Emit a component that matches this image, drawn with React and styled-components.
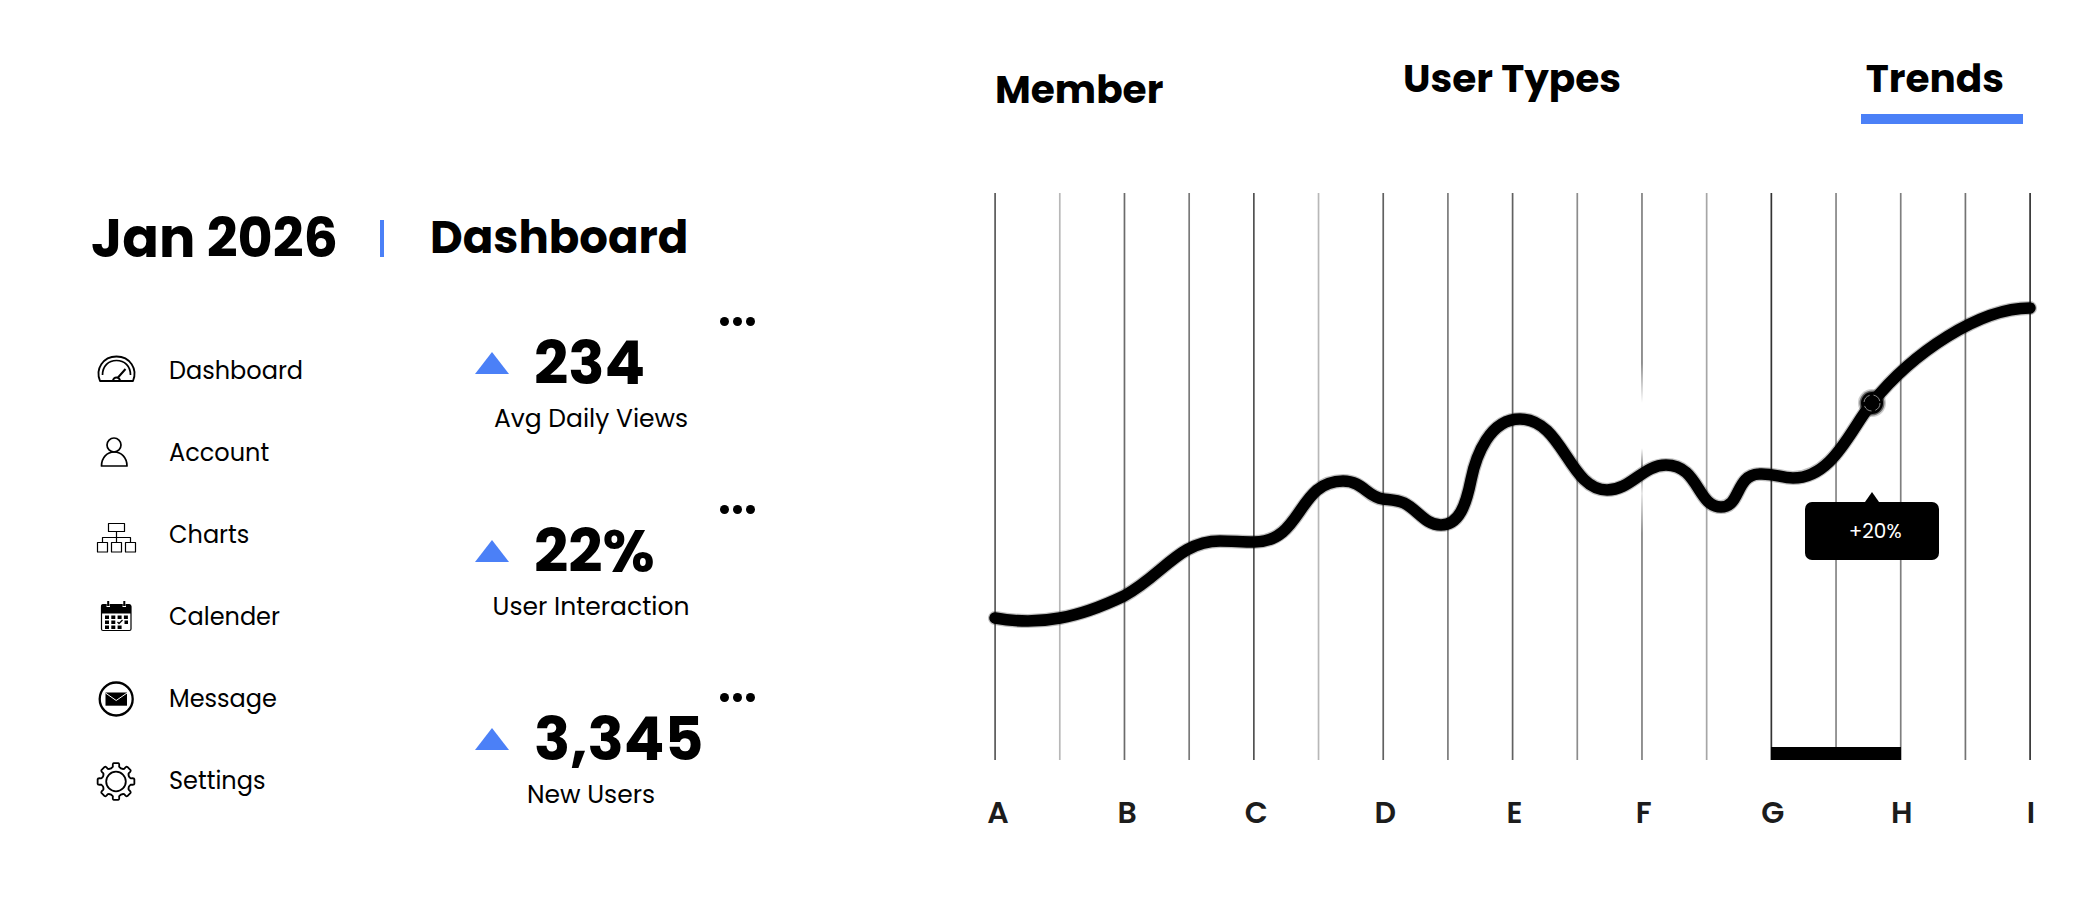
import React from "react"
import styled, { createGlobalStyle } from "styled-components"

const navItems = [
    { name: "Dashboard", icon: <GaugeIcon /> },
    { name: "Account", icon: <AccountIcon /> },
    { name: "Charts", icon: <ChartsIcon /> },
    { name: "Calender", icon: <CalendarIcon /> },
    { name: "Message", icon: <MessageIcon /> },
    { name: "Settings", icon: <GearIcon /> },
]

const stats = [
    { value: "234", label: "Avg Daily Views" },
    { value: "22%", label: "User Interaction" },
    { value: "3,345", label: "New Users" },
]

const months = ["A", "B", "C", "D", "E", "F", "G", "H", "I"]

// darkness of every vertical line, left to right
const lines = [0.65, 0.28, 0.58, 0.52, 0.68, 0.28, 0.62, 0.52, 0.62, 0.45, 0.5, 0.35, 0.8, 0.48, 0.5, 0.55, 0.8]

const trend = [
    "M0 425",
    "C22 429 44 429 65 425",
    "C88 421 108 413 129 403",
    "C168 382 184 348 225 348",
    "C237 348 247 349 259 349",
    "C308 349 302 288 348 288",
    "C368 288 372 304 388 306",
    "C396 307 402 307 409 310",
    "C422 316 430 332 446 332",
    "C464 332 471 312 476 287",
    "C481 262 495 226 525 226",
    "C568 226 574 297 612 297",
    "C636 297 648 272 671 272",
    "C704 272 702 314 726 314",
    "C746 314 740 282 764 281",
    "C777 280 786 285 798 285",
    "C838 285 856 235 877 210",
    "C918 159 985 115 1035 115",
].join(" ")

const gearPath = () => {
    const at = (r, deg) => {
        const t = (deg * Math.PI) / 180
        return `${(20 + r * Math.sin(t)).toFixed(2)} ${(21.5 - r * Math.cos(t)).toFixed(2)}`
    }
    let d = ""
    for (let k = 0; k < 8; k++) {
        const m = k * 45
        d += `${k ? "L" : "M"}${at(15, m - 12)} L${at(17, m - 11)} Q${at(18.5, m - 10)} ${at(18.5, m - 7)} L${at(18.5, m + 7)} Q${at(18.5, m + 10)} ${at(17, m + 11)} L${at(15, m + 12)} Q${at(13, m + 22.5)} ${at(15, m + 33)} `
    }
    return d + "Z"
}

function GaugeIcon() {
    return (
        <Icon viewBox="0 0 40 40" aria-hidden="true">
            <path d="M4 31C-1 19 7 6.500 20.500 6.500S42 19 37 31Z" strokeWidth="1.8" />
            <path d="M6.500 25C6.500 16 12.500 10.500 20.500 10.500S34.500 16 34.500 25" strokeWidth="1.7" />
            <path d="M17 31a3.500 3.500 0 0 1 7 0M22 27.500L29.500 19" strokeWidth="2" />
        </Icon>
    )
}

function AccountIcon() {
    return (
        <Icon viewBox="0 0 40 40" aria-hidden="true">
            <circle cx="18" cy="13" r="7" strokeWidth="1.7" />
            <path d="M5.500 34C5.500 25.500 11 20 18.200 20S31 25.500 31 34Z" strokeWidth="1.7" />
        </Icon>
    )
}

function ChartsIcon() {
    return (
        <Icon viewBox="0 0 40 40" aria-hidden="true">
            <path d="M12.500 9.500h16v8h-16ZM20.500 17.500v11M6.500 28.500v-5h28v5M1.500 28.500h10v9.500h-10ZM15.500 28.500h10v9.500h-10ZM29.500 28.500h10v9.500h-10Z" strokeWidth="1.2" />
        </Icon>
    )
}

function CalendarIcon() {
    return (
        <Icon viewBox="0 0 40 40" aria-hidden="true">
            <rect x="5.500" y="9" width="29.500" height="25.500" rx="1.500" strokeWidth="1.2" />
            <path d="M5 17.500V10q0-2 2-2h3.500v3h3.500v-3h12.500v3h3.500v-3h3q2 0 2 2V17.500Z" fill="#000" stroke="none" />
            <path d="M12.200 5v5M28.300 5v5" strokeWidth="2" />
            <path d="M9 19.500h4v3.500H9ZM15.300 19.500h4v3.500h-4ZM21.600 19.500h4v3.500h-4ZM27.900 19.500h4v3.500h-4ZM9 24.500h4v3.500H9ZM15.300 24.500h4v3.500h-4ZM28.500 24.500h3.500v3.500h-3.500ZM9 29.500h4v3.500H9ZM15.300 29.500h4v3.500h-4ZM21.600 29.500h4v3.500h-4Z" fill="#000" stroke="none" />
            <path d="M21.500 26l1.500 1.500 3.500-3.500" strokeWidth="1.300" />
        </Icon>
    )
}

function MessageIcon() {
    return (
        <Icon viewBox="0 0 40 40" aria-hidden="true">
            <circle cx="20.200" cy="21" r="16.500" strokeWidth="2.3" />
            <rect x="9.500" y="14.500" width="21.500" height="13.200" fill="#000" stroke="none" />
            <path d="M9.500 15l10.700 7.500 10.800-7.500" stroke="#fff" strokeWidth="1" />
        </Icon>
    )
}

function GearIcon() {
    return (
        <Icon viewBox="0 0 40 40" aria-hidden="true">
            <path d={gearPath()} strokeWidth="1.800" />
            <circle cx="20" cy="21.500" r="9.800" strokeWidth="1.800" />
        </Icon>
    )
}

const StatComp = ({ value, label }) => {
    return (
        <Stat>
            <MoreButton aria-label={`More about ${label}`}>
                <Dot />
                <Dot />
                <Dot />
            </MoreButton>
            <ValueRow>
                <Triangle />
                <Value>{value}</Value>
            </ValueRow>
            <StatLabel>{label}</StatLabel>
        </Stat>
    )
}

const ChartComp = () => {
    return (
        <ChartHolder>
            <Plot>
                <Drawing viewBox="0 0 1035 567" role="img" aria-label="Trend from A to I">
                    <defs>
                        <linearGradient id="fade" gradientUnits="userSpaceOnUse" x1="0" y1="0" x2="0" y2="567">
                            <stop offset="0" stopColor="#000" />
                            <stop offset="0.3" stopColor="#000" />
                            <stop offset="0.37" stopColor="#000" stopOpacity="0" />
                            <stop offset="0.45" stopColor="#000" stopOpacity="0" />
                            <stop offset="0.48" stopColor="#000" />
                            <stop offset="0.53" stopColor="#000" stopOpacity="0.2" />
                            <stop offset="0.6" stopColor="#000" />
                            <stop offset="1" stopColor="#000" />
                        </linearGradient>
                    </defs>
                    {lines.map((shade, i) => (
                        <rect
                            key={i}
                            x={(i * 1035) / 16 - 0.75}
                            y="0"
                            width="1.7"
                            height="567"
                            fill={i === 10 ? "url(#fade)" : "#000"}
                            opacity={shade}
                        />
                    ))}
                    <rect x="776" y="554" width="130" height="13" />
                    <g fill="none" stroke="#000" strokeLinecap="round" strokeLinejoin="round">
                        <path d={trend} strokeWidth="14" opacity="0.25" />
                        <path d={trend} strokeWidth="11.500" />
                    </g>
                    <circle cx="877" cy="210" r="14" opacity="0.2" />
                    <circle cx="877" cy="210" r="12.500" opacity="0.5" />
                    <circle cx="877" cy="210" r="11" />
                    <circle cx="877" cy="210" r="8" fill="none" stroke="#aaa" strokeWidth="0.8" strokeDasharray="9 4" />
                </Drawing>
                <Tooltip>+20%</Tooltip>
            </Plot>
            <Axis>
                {months.map((m) => (
                    <AxisLabel key={m}>{m}</AxisLabel>
                ))}
            </Axis>
        </ChartHolder>
    )
}

const App = () => {
    return (
        <Container>
            <GlobalStyle />
            <Left>
                <Header>
                    <DateText>Jan 2026</DateText>
                    <Divider />
                    <Title>Dashboard</Title>
                </Header>
                <Body>
                    <Nav>
                        {navItems.map((item) => (
                            <NavLink href="#" key={item.name}>
                                {item.icon}
                                {item.name}
                            </NavLink>
                        ))}
                    </Nav>
                    <Stats>
                        {stats.map((s) => (
                            <StatComp key={s.label} value={s.value} label={s.label} />
                        ))}
                    </Stats>
                </Body>
            </Left>
            <Right>
                <Tabs>
                    <Tab $as="center">Member</Tab>
                    <Tab>User Types</Tab>
                    <Tab $active>Trends</Tab>
                </Tabs>
                <ChartComp />
            </Right>
        </Container>
    )
}
export default App

const GlobalStyle = createGlobalStyle`
* {
    box-sizing: border-box;
}
body {
    margin: 0;
    background-color: #fff;
    color: #000;
    font-family: Poppins, Inter, sans-serif;
}
button {
    border: none;
    background: none;
    padding: 0;
    color: inherit;
    font-family: inherit;
    cursor: pointer;
}
`
const AxisLabel = styled.div`
width: 40px;
text-align: center;
font-size: 30px;
font-weight: 600;
line-height: 36px;
color: #1c1c1c;
`
const Axis = styled.div`
display: flex;
justify-content: space-between;
margin: 35px -21px 0 -17px;
`
const Tooltip = styled.div`
position: absolute;
left: 84.7%;
top: 54.5%;
width: 134px;
height: 58px;
padding-left: 7px;
transform: translateX(-50%);
display: flex;
align-items: center;
justify-content: center;
border-radius: 7px;
background-color: #000;
color: #fff;
font-size: 20px;
&::before {
    content: "";
    position: absolute;
    left: 60px;
    top: -10px;
    border: 7px solid transparent;
    border-top: none;
    border-bottom: 10px solid #000;
}
`
const Drawing = styled.svg`
display: block;
width: 100%;
height: auto;
overflow: visible;
`
const Plot = styled.div`
position: relative;
`
const ChartHolder = styled.div`
margin-top: 68px;
`
const Tab = styled.button`
align-self: ${({$as})=>$as ? $as : "flex-start"};
padding: ${({$active})=>$active ? "0 19px 11px 5px" : "0"};
border-bottom: ${({$active})=>$active ? "10px solid #4b80f7" : "none"};
font-size: 39px;
font-weight: 700;
line-height: 48px;
white-space: nowrap;
`
const Tabs = styled.div`
display: flex;
justify-content: space-between;
height: 70px;
padding-right: 7px;
`
const Right = styled.div`
padding-top: 55px;
min-width: 0;
`
const StatLabel = styled.div`
margin-top: 8px;
padding-right: 48px;
text-align: center;
font-size: 25px;
line-height: 32px;
white-space: nowrap;
`
const Value = styled.div`
font-size: 60px;
font-weight: 700;
line-height: 64px;
`
const Triangle = styled.div`
border: 17px solid transparent;
border-top: none;
border-bottom: 22px solid #4b80f7;
`
const ValueRow = styled.div`
display: flex;
align-items: center;
gap: 25px;
`
const Dot = styled.span`
width: 9px;
height: 9px;
border-radius: 50%;
background-color: #000;
`
const MoreButton = styled.button`
display: flex;
align-items: center;
gap: 4px;
height: 20px;
margin-left: auto;
`
const Stat = styled.div`
display: flex;
flex-direction: column;
`
const Stats = styled.div`
display: flex;
flex-direction: column;
gap: 64px;
`
const Icon = styled.svg`
width: 40px;
height: 40px;
flex-shrink: 0;
overflow: visible;
fill: none;
stroke: #000;
stroke-linejoin: round;
`
const NavLink = styled.a`
display: flex;
align-items: center;
gap: 33px;
height: 50px;
color: #000;
font-size: 24px;
text-decoration: none;
`
const Nav = styled.nav`
display: flex;
flex-direction: column;
gap: 32px;
padding: 34px 0 0 5px;
`
const Body = styled.div`
display: grid;
grid-template-columns: 384fr 280fr;
margin-top: 41px;
`
const Title = styled.h1`
margin: 0;
font-size: 45px;
font-weight: 700;
`
const Divider = styled.div`
width: 4px;
height: 37px;
margin-right: 4px;
background-color: #4b80f7;
`
const DateText = styled.div`
font-size: 54px;
font-weight: 700;
white-space: nowrap;
`
const Header = styled.div`
display: flex;
align-items: center;
gap: 42px;
height: 64px;
`
const Left = styled.div`
padding-top: 206px;
min-width: 0;
`
const Container = styled.div`
display: grid;
grid-template-columns: 664fr 1035fr;
column-gap: 240px;
padding: 0 70px 30px 91px;
`
